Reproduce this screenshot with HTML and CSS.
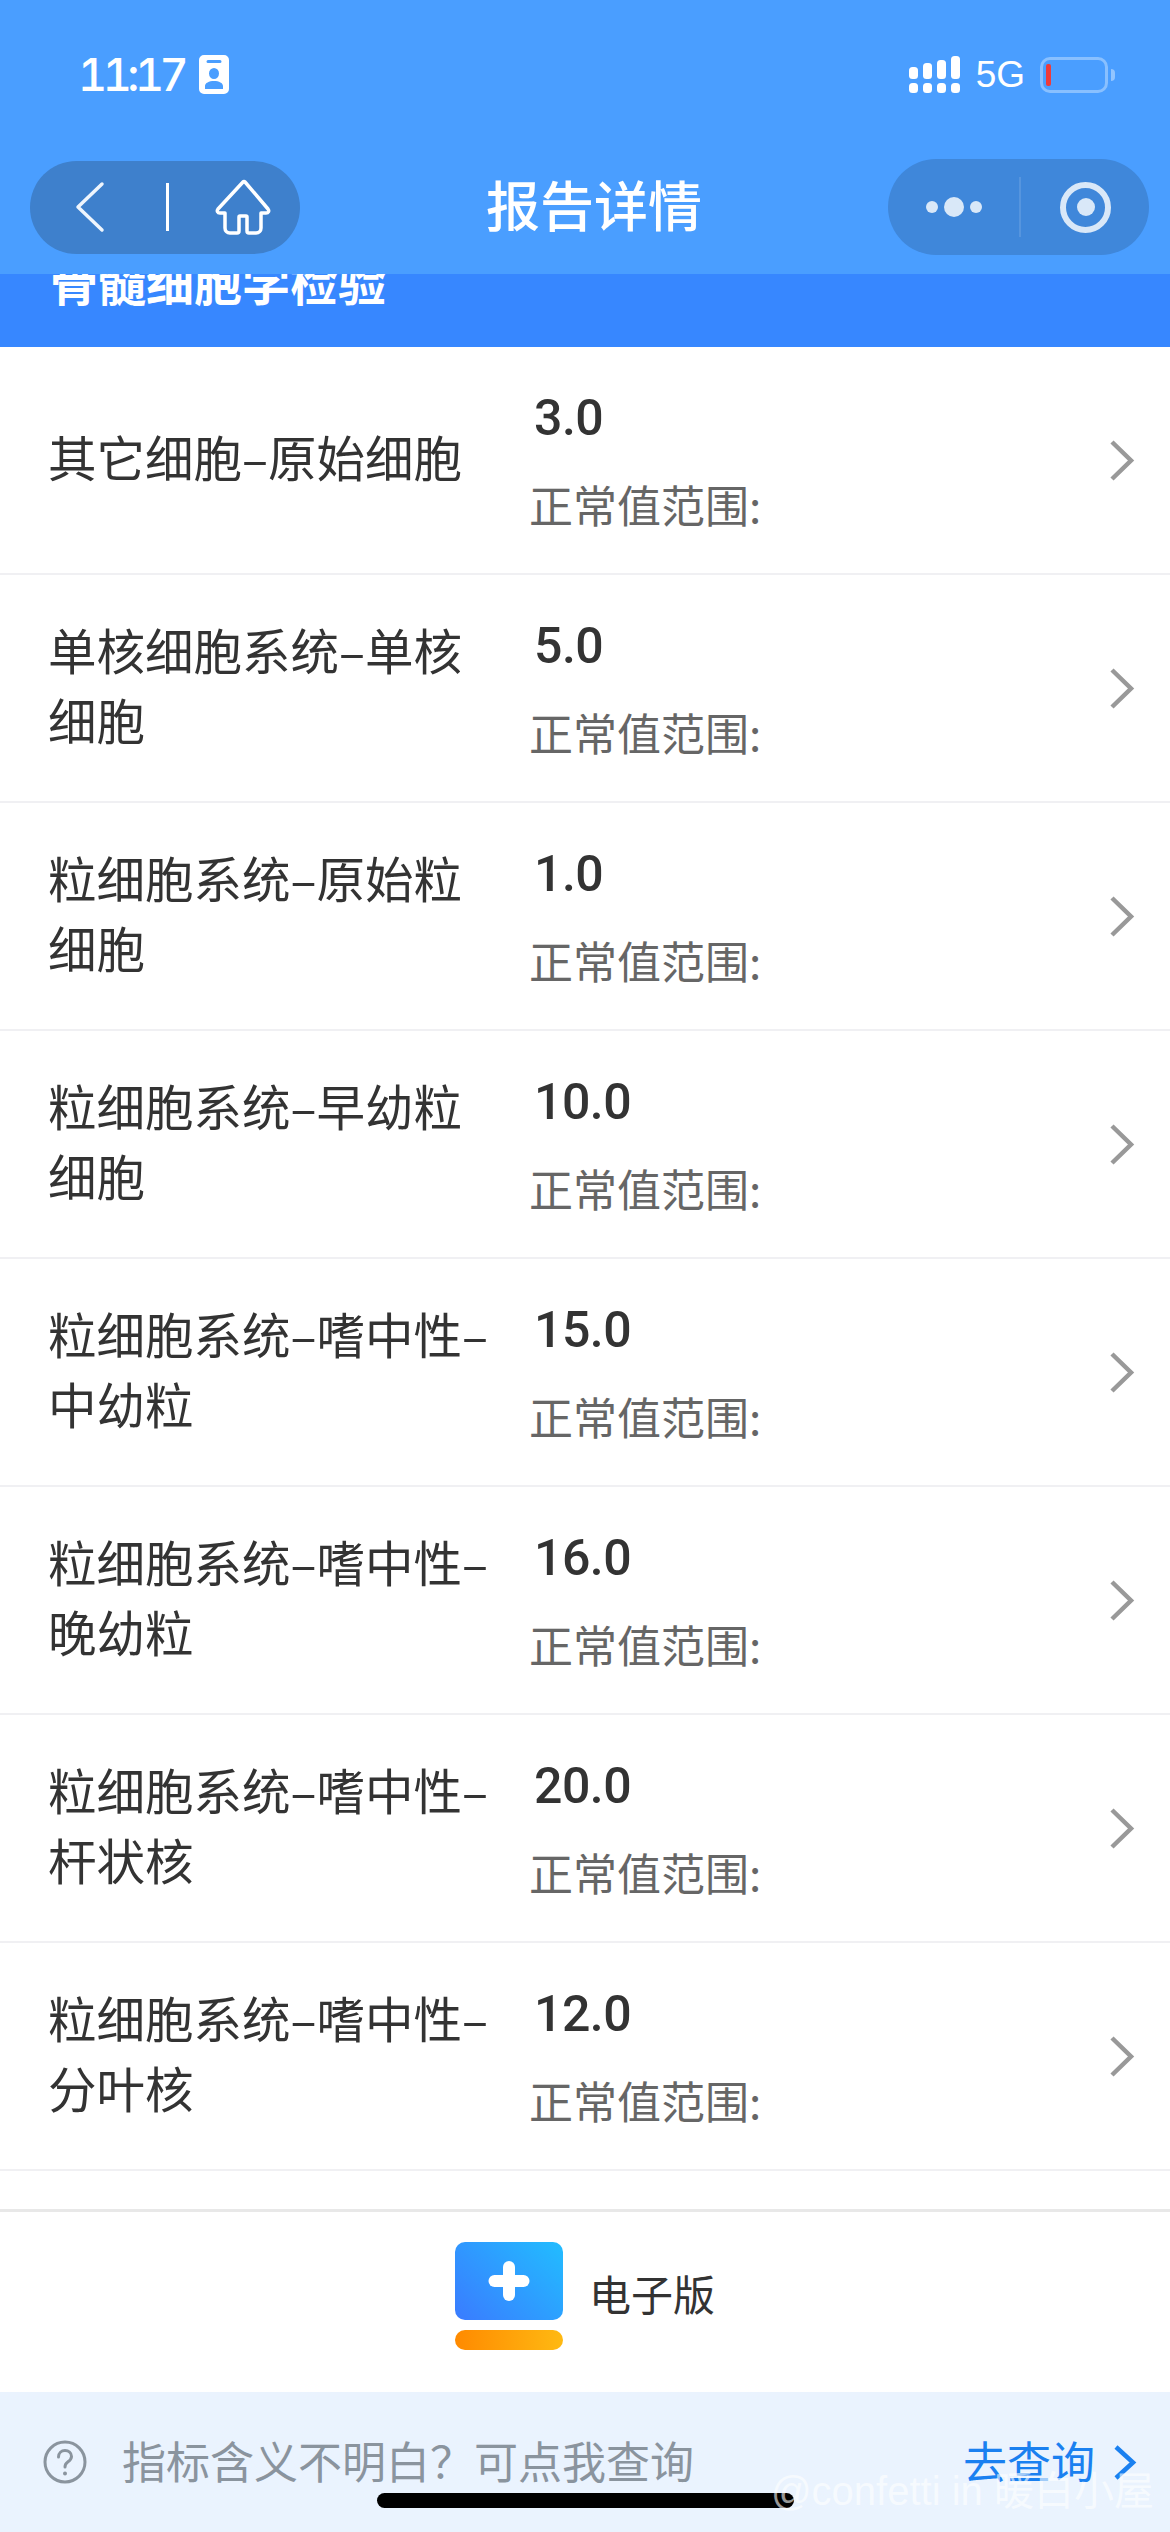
FILE: index.html
```html
<!DOCTYPE html>
<html lang="zh-CN">

<head>
  <meta charset="UTF-8" />
  <meta name="viewport" content="width=device-width, initial-scale=1.0" />
  <title>报告详情</title>
  <link rel="stylesheet" href="styles.css">
</head>

<body>
  <div class="page">
    <div class="top-bar">
      <div class="status-bar">
        <div class="status-left">
          <span class="clock">11:17</span>
          <svg class="id-icon" width="30" height="39" viewBox="0 0 30 39">
            <path fill="#fff" fill-rule="evenodd" d="M5 0h20a5 5 0 0 1 5 5v29a5 5 0 0 1-5 5H5a5 5 0 0 1-5-5V5a5 5 0 0 1 5-5zM9 5a1.500 1.500 0 0 0 0 3h12a1.500 1.500 0 0 0 0-3zM15 13a5 5.500 0 1 0 0 11 5 5.500 0 0 0 0-11zM15 26c-5 0-9 2-9 5v3h18v-3c0-3-4-5-9-5z" />
          </svg>
        </div>
        <div class="status-right">
          <div class="signal">
            <div class="signal-col"><i class="bar-1"></i><i class="dot"></i></div>
            <div class="signal-col"><i class="bar-2"></i><i class="dot"></i></div>
            <div class="signal-col"><i class="bar-3"></i><i class="dot"></i></div>
            <div class="signal-col"><i class="bar-4"></i><i class="dot"></i></div>
          </div>
          <span class="net">5G</span>
          <div class="battery"><i class="battery-level"></i></div>
          <i class="battery-nub"></i>
        </div>
      </div>

      <div class="nav-bar">
        <div class="pill pill-left">
          <svg width="31" height="52" viewBox="0 0 31 52">
            <path d="M28 3 4 26l24 23" fill="none" stroke="#eef5fd" stroke-width="3.500" stroke-linecap="round" stroke-linejoin="round" />
          </svg>
          <i class="pill-line"></i>
          <svg width="58" height="56" viewBox="0 0 58 56">
            <path d="M29 3 4 30c-1.500 2-.5 4 2 4h5v15c0 3 2 5 5 5h7c1.500 0 2-.5 2-2V38a1 1 0 0 1 1-1h6a1 1 0 0 1 1 1v14c0 1.500.5 2 2 2h7c3 0 5-2 5-5V34h5c2.500 0 3.500-2 2-4L31 3c-.5-.7-1.500-.7-2 0z" fill="none" stroke="#fff" stroke-width="3.500" stroke-linejoin="round" />
          </svg>
        </div>
        <h1 class="nav-title">报告详情</h1>
        <div class="pill pill-right">
          <div class="more">
            <i class="more-small"></i><i class="more-big"></i><i class="more-small"></i>
          </div>
          <i class="pill-line-dim"></i>
          <div class="target"><i></i></div>
        </div>
      </div>
    </div>

    <div class="section-head"><span>骨髓细胞学检验</span></div>

    <div class="list">
      <div class="row">
        <div class="row-name">其它细胞–原始细胞</div>
        <div class="row-info">
          <div class="row-value">3.0</div>
          <div class="row-range">正常值范围:</div>
        </div>
        <svg class="row-arrow" width="26" height="43" viewBox="0 0 26 43"><path d="M3 3l19 18.500L3 40" /></svg>
      </div>
      <div class="row">
        <div class="row-name">单核细胞系统–单核细胞</div>
        <div class="row-info">
          <div class="row-value">5.0</div>
          <div class="row-range">正常值范围:</div>
        </div>
        <svg class="row-arrow" width="26" height="43" viewBox="0 0 26 43"><path d="M3 3l19 18.500L3 40" /></svg>
      </div>
      <div class="row">
        <div class="row-name">粒细胞系统–原始粒细胞</div>
        <div class="row-info">
          <div class="row-value">1.0</div>
          <div class="row-range">正常值范围:</div>
        </div>
        <svg class="row-arrow" width="26" height="43" viewBox="0 0 26 43"><path d="M3 3l19 18.500L3 40" /></svg>
      </div>
      <div class="row">
        <div class="row-name">粒细胞系统–早幼粒细胞</div>
        <div class="row-info">
          <div class="row-value">10.0</div>
          <div class="row-range">正常值范围:</div>
        </div>
        <svg class="row-arrow" width="26" height="43" viewBox="0 0 26 43"><path d="M3 3l19 18.500L3 40" /></svg>
      </div>
      <div class="row">
        <div class="row-name">粒细胞系统–嗜中性–中幼粒</div>
        <div class="row-info">
          <div class="row-value">15.0</div>
          <div class="row-range">正常值范围:</div>
        </div>
        <svg class="row-arrow" width="26" height="43" viewBox="0 0 26 43"><path d="M3 3l19 18.500L3 40" /></svg>
      </div>
      <div class="row">
        <div class="row-name">粒细胞系统–嗜中性–晚幼粒</div>
        <div class="row-info">
          <div class="row-value">16.0</div>
          <div class="row-range">正常值范围:</div>
        </div>
        <svg class="row-arrow" width="26" height="43" viewBox="0 0 26 43"><path d="M3 3l19 18.500L3 40" /></svg>
      </div>
      <div class="row">
        <div class="row-name">粒细胞系统–嗜中性–杆状核</div>
        <div class="row-info">
          <div class="row-value">20.0</div>
          <div class="row-range">正常值范围:</div>
        </div>
        <svg class="row-arrow" width="26" height="43" viewBox="0 0 26 43"><path d="M3 3l19 18.500L3 40" /></svg>
      </div>
      <div class="row">
        <div class="row-name">粒细胞系统–嗜中性–分叶核</div>
        <div class="row-info">
          <div class="row-value">12.0</div>
          <div class="row-range">正常值范围:</div>
        </div>
        <svg class="row-arrow" width="26" height="43" viewBox="0 0 26 43"><path d="M3 3l19 18.500L3 40" /></svg>
      </div>
    </div>

    <div class="ebook">
      <div class="ebook-icon">
        <div class="ebook-top"><i class="plus-h"></i><i class="plus-v"></i></div>
        <div class="ebook-base"></div>
      </div>
      <span class="ebook-text">电子版</span>
    </div>

    <div class="help-bar">
      <svg class="help-icon" width="44" height="44" viewBox="0 0 44 44">
        <circle cx="22" cy="22" r="20" fill="none" stroke="#8a949e" stroke-width="3" />
        <path d="M15.500 17c0-4 3-6.500 6.500-6.500s6.500 2.300 6.500 6c0 3-2 4.300-4 5.700-1.700 1.200-2.500 2.300-2.500 4.800" fill="none" stroke="#8a949e" stroke-width="3" stroke-linecap="round" />
        <circle cx="22" cy="33.500" r="2" fill="#8a949e" />
      </svg>
      <span class="help-text">指标含义不明白&#65311;可点我查询</span>
      <span class="help-link">去查询</span>
      <svg class="help-arrow" width="24" height="37" viewBox="0 0 24 37"><path d="M3 3l17 15.500L3 34" /></svg>
    </div>

    <div class="home-indicator"></div>
    <div class="watermark">@confetti in 暖白小屋</div>
  </div>
</body>

</html>
```

FILE: styles.css
```css
* {
  box-sizing: border-box;
}

html,
body {
  margin: 0;
  padding: 0;
}

body {
  font-family: "Noto Sans CJK SC", "Liberation Sans", sans-serif;
  background-color: #fff;
}

i {
  display: block;
}

.page {
  position: relative;
  width: 1170px;
  height: 2532px;
  overflow: hidden;
  display: flex;
  flex-direction: column;
}

/* top blue area */
.top-bar {
  height: 274px;
  flex-shrink: 0;
  background-color: #4a9eff;
  padding-top: 55px;
}

.status-bar {
  height: 39px;
  display: flex;
  justify-content: space-between;
  align-items: center;
  padding: 0 55px 0 78px;
}

.status-left {
  display: flex;
  align-items: center;
  gap: 15px;
}

.clock {
  font-family: Inter, sans-serif;
  font-size: 45px;
  font-weight: 500;
  font-variant-numeric: tabular-nums;
  letter-spacing: -4.500px;
  line-height: 39px;
  color: #fff;
}

.status-right {
  display: flex;
  align-items: center;
}

.signal {
  display: flex;
  gap: 5px;
  margin-right: 16px;
}

.signal-col {
  width: 9px;
  height: 37px;
  display: flex;
  flex-direction: column;
  justify-content: flex-end;
  gap: 4px;
}

.signal-col i {
  background-color: #fff;
  border-radius: 3.500px;
}

.signal-col .dot {
  height: 10px;
}

.signal-col .bar-1 {
  height: 12px;
}

.signal-col .bar-2 {
  height: 16px;
}

.signal-col .bar-3 {
  height: 19px;
}

.signal-col .bar-4 {
  height: 23px;
}

.net {
  font-family: "Liberation Sans", sans-serif;
  font-size: 37px;
  line-height: 39px;
  color: #fff;
  margin-right: 15px;
}

.battery {
  width: 68px;
  height: 36px;
  border: 3px solid rgba(255, 255, 255, 0.35);
  border-radius: 10px;
  padding: 4px 3px;
}

.battery-level {
  width: 5px;
  height: 22px;
  border-radius: 2px;
  background-color: #ee3b3b;
}

.battery-nub {
  width: 4px;
  height: 12px;
  margin-left: 3px;
  border-radius: 0 4px 4px 0;
  background-color: rgba(255, 255, 255, 0.4);
}

.nav-bar {
  margin-top: 65px;
  display: flex;
  justify-content: space-between;
  align-items: center;
  padding: 0 21px 0 30px;
}

.pill {
  display: flex;
  align-items: center;
  border-radius: 48px;
}

.pill-left {
  width: 270px;
  height: 93px;
  padding-left: 44px;
  background-color: #3e80cc;
}

.pill-line {
  width: 3px;
  height: 48px;
  margin: 0 45px 0 61px;
  background-color: #fff;
}

.pill-right {
  width: 261px;
  height: 96px;
  padding-left: 38px;
  background-color: #3f87da;
}

.more {
  display: flex;
  align-items: center;
  gap: 6px;
}

.more-small {
  width: 12px;
  height: 12px;
  border-radius: 50%;
  background-color: #d9e8f8;
}

.more-big {
  width: 20px;
  height: 20px;
  border-radius: 50%;
  background-color: #d9e8f8;
}

.pill-line-dim {
  width: 2px;
  height: 60px;
  margin: 0 39px 0 37px;
  background-color: rgba(255, 255, 255, 0.12);
}

.target {
  width: 51px;
  height: 51px;
  border: 6px solid #d9e8f8;
  border-radius: 50%;
  display: flex;
  align-items: center;
  justify-content: center;
}

.target i {
  width: 18px;
  height: 18px;
  border-radius: 50%;
  background-color: #d9e8f8;
}

.nav-title {
  margin: 0 0 6px;
  font-size: 54px;
  font-weight: 500;
  line-height: 74px;
  color: #fff;
}

/* section title, scrolled most of the way under the nav */
.section-head {
  height: 73px;
  flex-shrink: 0;
  overflow: hidden;
  padding-left: 50px;
  background-color: #3787ff;
}

.section-head span {
  display: block;
  margin-top: -29px;
  font-size: 48px;
  font-weight: 700;
  line-height: 70px;
  color: #fff;
}

/* result rows */
.list {
  flex-shrink: 0;
}

.row {
  height: 228px;
  display: flex;
  align-items: center;
  padding-left: 48px;
  border-bottom: 2px solid #f0f0f3;
}

.row-name {
  width: 446px;
  margin: 0 35px 8px 0;
  font-size: 48.500px;
  line-height: 70px;
  color: #333;
}

.row-info {
  width: 580px;
}

.row-value {
  padding: 2px 0 0 5px;
  font-family: Roboto, sans-serif;
  font-size: 50px;
  font-weight: 500;
  letter-spacing: -0.5px;
  line-height: 70px;
  color: #333;
}

.row-range {
  margin-top: 16px;
  font-size: 44px;
  line-height: 70px;
  color: #666;
}

.row-arrow path {
  fill: none;
  stroke: #999;
  stroke-width: 4.500px;
}

/* e-report button */
.ebook {
  flex: 1;
  margin-top: 38px;
  border-top: 3px solid #e8e8e8;
  padding-bottom: 12px;
  display: flex;
  justify-content: center;
  align-items: center;
  gap: 26px;
}

.ebook-icon {
  width: 108px;
  display: flex;
  flex-direction: column;
  gap: 10px;
}

.ebook-top {
  position: relative;
  height: 78px;
  border-radius: 10px;
  background: linear-gradient(45deg, #3a7bff, #22bdff);
}

.plus-h,
.plus-v {
  position: absolute;
  left: 50%;
  top: 50%;
  background-color: #fff;
  border-radius: 6px;
  transform: translate(-50%, -50%);
}

.plus-h {
  width: 41px;
  height: 12px;
}

.plus-v {
  width: 12px;
  height: 40px;
}

.ebook-base {
  height: 20px;
  border-radius: 10px;
  background: linear-gradient(90deg, #ff8a00, #ffb912);
}

.ebook-text {
  margin-bottom: 8px;
  font-size: 42px;
  color: #333;
}

/* help bar */
.help-bar {
  height: 140px;
  flex-shrink: 0;
  display: flex;
  align-items: center;
  padding-left: 43px;
  background-color: #eaf3fe;
}

.help-text {
  margin: 0 0 4px 35px;
  font-size: 44px;
  color: #8a949e;
}

.help-link {
  margin: 0 0 4px auto;
  font-size: 44px;
  color: #1a80f0;
}

.help-arrow {
  margin: 0 33px 0 18px;
}

.help-arrow path {
  fill: none;
  stroke: #1a80f0;
  stroke-width: 4.500px;
}

/* overlays on top of the screenshot */
.home-indicator {
  position: absolute;
  left: 377px;
  top: 2493px;
  width: 417px;
  height: 15px;
  border-radius: 8px;
  background-color: #000;
}

.watermark {
  position: absolute;
  left: 771px;
  top: 2468px;
  font-family: "Liberation Sans", "Noto Sans CJK SC", sans-serif;
  font-size: 40px;
  line-height: 46px;
  white-space: nowrap;
  color: rgba(255, 255, 255, 0.6);
}
```
